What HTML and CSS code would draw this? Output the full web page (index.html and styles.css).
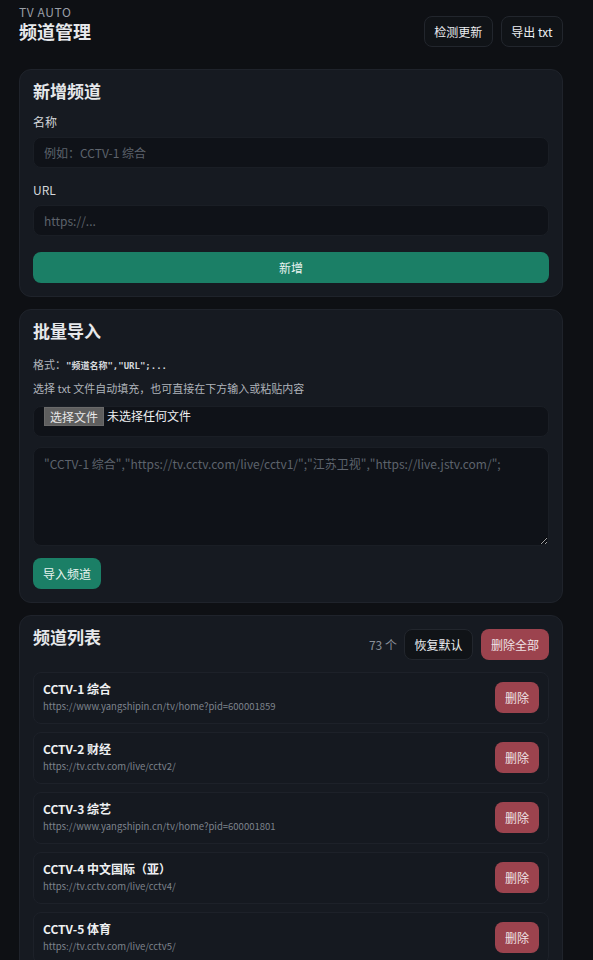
FILE: index.html
```html
<!DOCTYPE html>
<html lang="zh-CN">
<head>
    <meta charset="UTF-8">
    <meta name="viewport" content="width=device-width, initial-scale=1.0">
    <title>频道管理</title>
    <link rel="stylesheet" href="styles.css">
</head>
<body>

    <div class="page">
        <!-- Header -->
        <div class="header">
            <div class="header-title">
                <div class="brand">TV AUTO</div>
                <h1>频道管理</h1>
            </div>
            <div class="header-actions">
                <button class="btn btn-ghost">检测更新</button>
                <button class="btn btn-ghost">导出 txt</button>
            </div>
        </div>

        <!-- Add channel -->
        <div class="card">
            <h2>新增频道</h2>
            <label for="name">名称</label>
            <input type="text" id="name" placeholder="例如：CCTV-1 综合">
            <label for="url" class="label-gap">URL</label>
            <input type="text" id="url" placeholder="https://...">
            <button class="btn btn-green btn-block">新增</button>
        </div>

        <!-- Bulk import -->
        <div class="card">
            <h2>批量导入</h2>
            <p class="hint">格式：<code>"频道名称","URL";...</code></p>
            <p class="hint hint-second">选择 txt 文件自动填充，也可直接在下方输入或粘贴内容</p>
            <div class="file-box">
                <span class="file-btn">选择文件</span>
                <span class="file-name">未选择任何文件</span>
            </div>
            <textarea placeholder='"CCTV-1 综合","https://tv.cctv.com/live/cctv1/";"江苏卫视","https://live.jstv.com/";'></textarea>
            <button class="btn btn-green">导入频道</button>
        </div>

        <!-- Channel list -->
        <div class="card">
            <div class="list-head">
                <h2>频道列表</h2>
                <div class="list-actions">
                    <span class="count">73 个</span>
                    <button class="btn btn-ghost">恢复默认</button>
                    <button class="btn btn-red">删除全部</button>
                </div>
            </div>
            <div class="channel-list" id="channelList"></div>
        </div>
    </div>

    <script>
        const channels = [
            ["CCTV-1 综合", "https://www.yangshipin.cn/tv/home?pid=600001859"],
            ["CCTV-2 财经", "https://tv.cctv.com/live/cctv2/"],
            ["CCTV-3 综艺", "https://www.yangshipin.cn/tv/home?pid=600001801"],
            ["CCTV-4 中文国际（亚）", "https://tv.cctv.com/live/cctv4/"],
            ["CCTV-5 体育", "https://tv.cctv.com/live/cctv5/"],
            ["CCTV-5+ 体育赛事", "https://tv.cctv.com/live/cctv5plus/"],
            ["CCTV-6 电影", "https://www.yangshipin.cn/tv/home?pid=600001802"]
        ];

        const list = document.getElementById("channelList");
        channels.forEach(function (ch) {
            const item = document.createElement("div");
            item.className = "channel";
            item.innerHTML =
                '<div class="channel-info">' +
                    '<div class="channel-name">' + ch[0] + '</div>' +
                    '<div class="channel-url">' + ch[1] + '</div>' +
                '</div>' +
                '<button class="btn btn-red">删除</button>';
            list.appendChild(item);
        });
    </script>

</body>
</html>
```

FILE: styles.css
```css
body {
    margin: 0;
    padding: 4px 30px 20px 19px;
    background-color: #0e1014;
    color: #e6e8eb;
    font-family: "Noto Sans CJK SC", "Noto Sans", sans-serif;
}

.page {
    width: 544px;
}

.header {
    display: flex;
    justify-content: space-between;
    align-items: flex-end;
    margin-bottom: 22px;
}

.header-title {
    padding-bottom: 4px;
}

.brand {
    font-size: 12px;
    line-height: 16px;
    letter-spacing: 0.6px;
    color: #9a9fa7;
}

h1 {
    margin: 0;
    font-size: 18px;
    line-height: 23px;
    font-weight: 700;
}

.header-actions {
    display: flex;
    gap: 8px;
}

.btn {
    font-family: "Noto Sans CJK SC", "Noto Sans", sans-serif;
    font-size: 12px;
    height: 31px;
    padding: 0 9.5px;
    border-radius: 8px;
    border: 1px solid transparent;
    color: #eceef1;
    cursor: pointer;
}

.btn-ghost {
    background: #101317;
    border-color: #22262d;
}

.btn-green {
    background: #1b7f66;
    color: #e9f4f0;
    padding: 0 9px;
}

.btn-red {
    background: #9c434e;
    color: #f0e4e6;
    padding: 0 9px;
}

.btn-block {
    display: block;
    width: 100%;
    margin-top: 16px;
}

.card {
    background: #161a21;
    border: 1px solid #1f232b;
    border-radius: 12px;
    padding: 9px 13px 13px;
    margin-bottom: 12px;
}

h2 {
    margin: 0;
    font-size: 17px;
    line-height: 24px;
    font-weight: 700;
}

label {
    display: block;
    font-size: 12px;
    line-height: 16px;
    color: #d3d6da;
    margin-top: 11px;
    margin-bottom: 7px;
}

label.label-gap {
    margin-top: 14px;
}

input,
textarea {
    display: block;
    box-sizing: border-box;
    width: 100%;
    background: #0f1218;
    border: 1px solid #1a1e25;
    border-radius: 8px;
    color: #e6e8eb;
    font-family: "Noto Sans CJK SC", "Noto Sans", sans-serif;
    font-size: 12px;
}

input {
    height: 31px;
    padding: 0 10px;
}

input::placeholder,
textarea::placeholder {
    color: #5d636c;
}

.hint {
    margin: 13px 0 0;
    font-size: 11px;
    line-height: 16px;
    height: 16px;
    color: #aeb3ba;
}

.hint-second {
    margin-top: 8px;
}

code {
    font-family: "DejaVu Sans Mono", "Noto Sans CJK SC", monospace;
    font-size: 9px;
    line-height: 1;
    font-weight: bold;
    color: #d5d8dc;
}

.file-box {
    box-sizing: border-box;
    height: 31px;
    margin-top: 10px;
    padding: 0 10px;
    background: #0f1218;
    border: 1px solid #1a1e25;
    border-radius: 8px;
    display: flex;
    align-items: flex-start;
    gap: 3px;
}

.file-btn {
    background: #5e5e5e;
    color: #e8e8e8;
    font-size: 12px;
    line-height: 17px;
    padding: 0 5px;
    border: 1px solid #6a6a6a;
}

.file-name {
    font-size: 12px;
    line-height: 17px;
    color: #eef0f2;
}

textarea {
    height: 99px;
    margin-top: 10px;
    margin-bottom: 12px;
    padding: 7px 10px;
    resize: vertical;
}

.list-head {
    display: flex;
    justify-content: space-between;
    align-items: flex-start;
}

.list-actions {
    display: flex;
    align-items: center;
    gap: 8px;
    margin-top: 4px;
}

.count {
    font-size: 12px;
    color: #8b9099;
    margin-right: -1px;
}

.channel-list {
    margin-top: 12px;
    display: flex;
    flex-direction: column;
    gap: 8px;
}

.channel {
    display: flex;
    align-items: center;
    justify-content: space-between;
    background: #151920;
    border: 1px solid #1d2129;
    border-radius: 8px;
    padding: 8px 9px 10px 9px;
}

.channel-name {
    font-size: 12px;
    line-height: 16px;
    font-weight: 700;
    color: #eef0f2;
}

.channel-url {
    margin-top: 2px;
    font-size: 9.5px;
    line-height: 14px;
    color: #7d838c;
}
```
